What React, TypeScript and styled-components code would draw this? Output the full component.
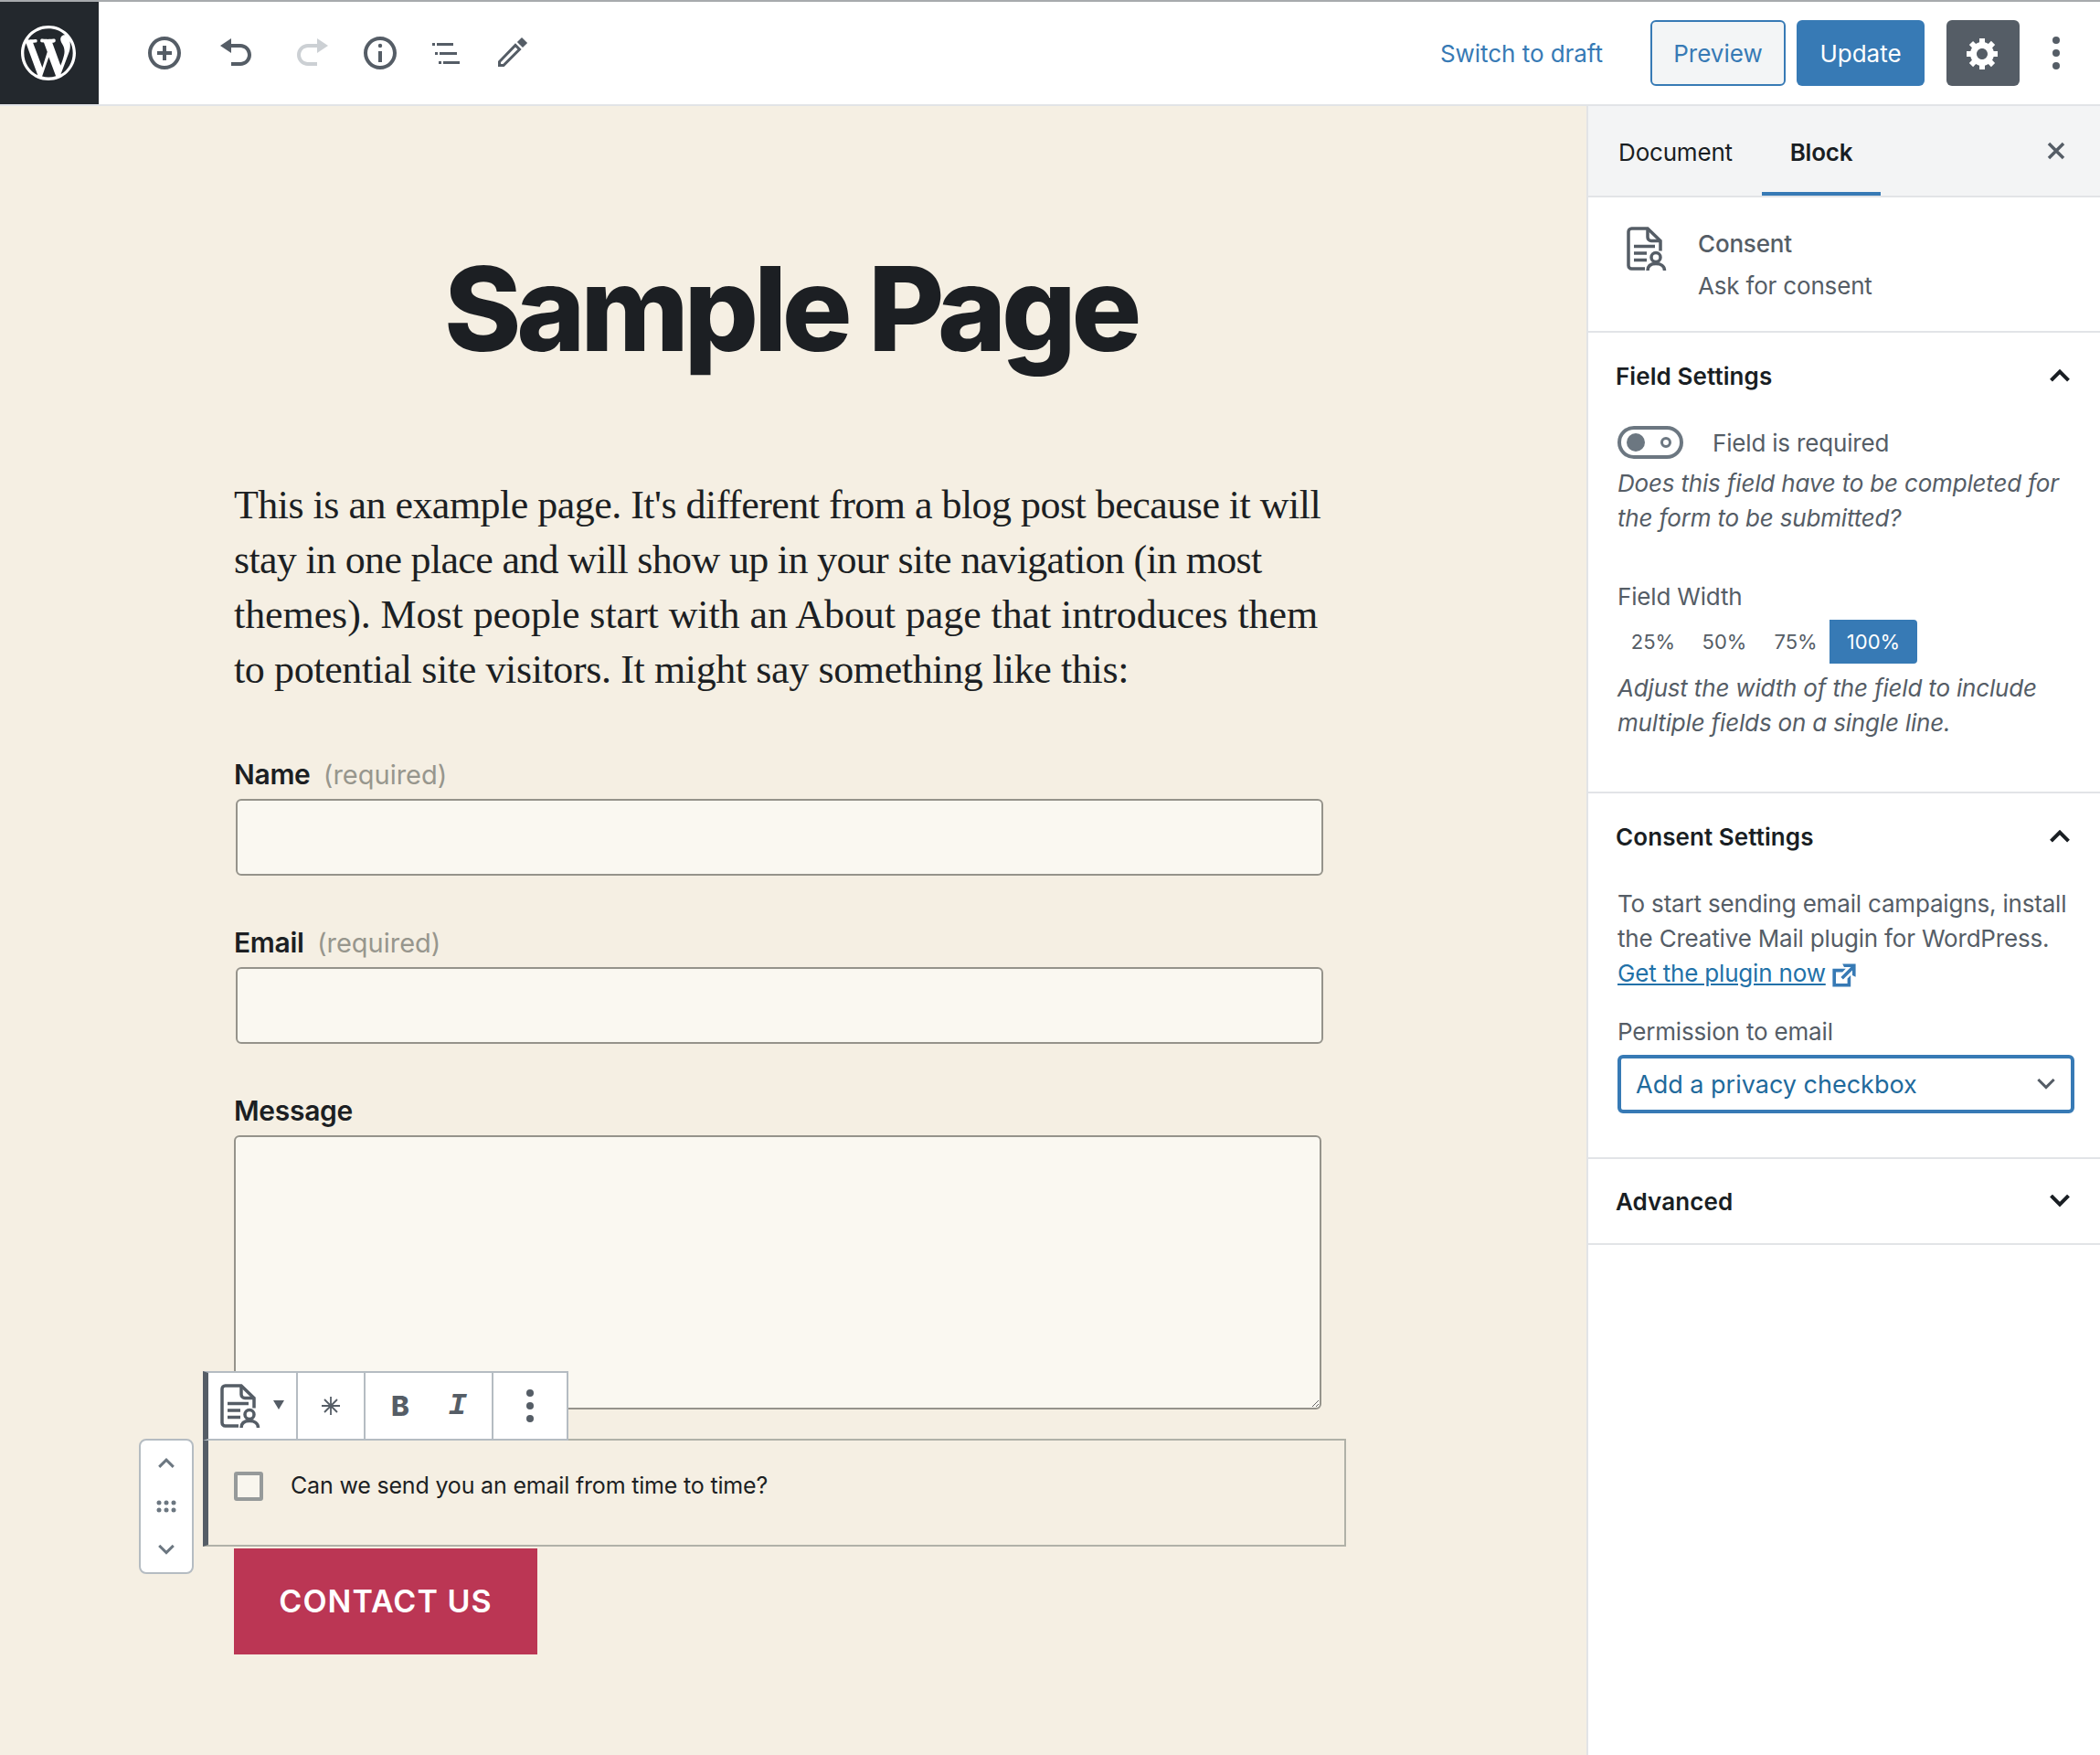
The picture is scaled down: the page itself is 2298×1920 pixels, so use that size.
import styled, { createGlobalStyle } from 'styled-components';

const GlobalStyle = createGlobalStyle`
  html, body {
    margin: 0;
    padding: 0;
    background: #fff;
  }
  * {
    box-sizing: border-box;
  }
`;

const paragraphLines = [
  { text: "This is an example page. It's different from a blog post because it will", spacing: -0.52 },
  { text: 'stay in one place and will show up in your site navigation (in most', spacing: -0.67 },
  { text: 'themes). Most people start with an About page that introduces them', spacing: -0.08 },
  { text: 'to potential site visitors. It might say something like this:', spacing: -0.38 },
];

const Chevron = ({ up, size = 22, weight = 4, color = '#191e23' }: { up?: boolean; size?: number; weight?: number; color?: string }) => (
  <svg width={size} height={size * 0.6} viewBox="0 0 22 13" fill="none" stroke={color} strokeWidth={(weight * 22) / size}>
    <path d={up ? 'M1.5 12 11 2.5l9.5 9.5' : 'M1.5 1 11 10.5 20.5 1'} />
  </svg>
);

const DotsIcon = () => (
  <svg width="40" height="40" viewBox="0 0 40 40" fill="#555d66">
    <circle cx="20" cy="6" r="4" />
    <circle cx="20" cy="20" r="4" />
    <circle cx="20" cy="34" r="4" />
  </svg>
);

const ConsentIcon = () => (
  <svg width="44" height="48" viewBox="0 0 44 48" fill="none" stroke="#555d66" strokeWidth="3.5">
    <path d="M20 46H5.500a3.500 3.500 0 0 1-3.500-3.500V5.500A3.500 3.500 0 0 1 5.500 2H23l14 13.500v11" />
    <path d="M23 2v9.500a4 4 0 0 0 4 4h10" />
    <path d="M8 21.500h23M8 29h14M8 36.500h14" />
    <circle cx="32" cy="33.500" r="5" />
    <path d="M23 48c0-5 3.500-7.500 9-7.500s9.500 2.500 9.500 7.500" />
  </svg>
);

const App = () => {
  return (
    <Page>
      <GlobalStyle />
      <TopBar>
        <Logo>
          <svg width="60" height="60" viewBox="0 0 20 20" fill="#fff">
            <path d="M20 10c0-5.510-4.490-10-10-10C4.480 0 0 4.490 0 10c0 5.520 4.480 10 10 10 5.510 0 10-4.480 10-10zM7.780 15.370L4.370 6.220c.550-.020 1.170-.080 1.170-.080.500-.060.440-1.130-.060-1.110 0 0-1.450.110-2.370.110-.180 0-.370 0-.580-.010C4.120 2.690 6.870 1.110 10 1.110c2.330 0 4.450.870 6.050 2.340-.680-.110-1.650.390-1.650 1.580 0 .740.450 1.360.900 2.100.350.610.550 1.360.550 2.460 0 1.490-1.400 5-1.400 5l-3.030-8.350c.540-.020.820-.170.820-.170.500-.050.440-1.250-.060-1.220 0 0-1.440.120-2.380.120-.870 0-2.330-.120-2.330-.120-.500-.030-.560 1.200-.060 1.220l.920.080 1.260 3.410zM17.410 10c.240-.640.740-1.870.430-4.250.700 1.290 1.050 2.710 1.050 4.250 0 3.290-1.730 6.240-4.400 7.780.970-2.590 1.940-5.200 2.920-7.780zM6.100 18.090C3.120 16.650 1.110 13.530 1.110 10c0-1.300.230-2.480.720-3.590C3.250 10.300 4.670 14.200 6.100 18.090zm4.030-6.630l2.580 6.980c-.850.290-1.750.430-2.710.430-.800 0-1.580-.110-2.300-.330.810-2.380 1.630-4.740 2.430-7.080z" />
          </svg>
        </Logo>
        <ToolIcons>
          <ToolIcon $left={0}>
            <svg width="40" height="40" viewBox="0 0 20 20" fill="#555d66">
              <path d="M10 1c-5 0-9 4-9 9s4 9 9 9 9-4 9-9-4-9-9-9zm0 16c-3.900 0-7-3.100-7-7s3.100-7 7-7 7 3.100 7 7-3.100 7-7 7zm1-11H9v3H6v2h3v3h2v-3h3V9h-3V6z" />
            </svg>
          </ToolIcon>
          <ToolIcon $left={39}>
            <svg width="40" height="40" viewBox="0 0 20 20" fill="#555d66">
              <path d="M12 5H7V2L1 6l6 4V7h5c2.200 0 4 1.800 4 4s-1.800 4-4 4H7v2h5c3.300 0 6-2.700 6-6s-2.700-6-6-6z" />
            </svg>
          </ToolIcon>
          <ToolIcon $left={42}>
            <svg width="40" height="40" viewBox="0 0 20 20" fill="#ccd0d4">
              <path d="M8 5h5V2l6 4-6 4V7H8c-2.200 0-4 1.800-4 4s1.800 4 4 4h5v2H8c-3.300 0-6-2.700-6-6s2.700-6 6-6z" />
            </svg>
          </ToolIcon>
          <ToolIcon $left={35}>
            <svg width="40" height="40" viewBox="0 0 20 20" fill="#555d66">
              <path d="M10 1c-5 0-9 4-9 9s4 9 9 9 9-4 9-9-4-9-9-9zm0 16c-3.900 0-7-3.100-7-7s3.100-7 7-7 7 3.100 7 7-3.100 7-7 7z" />
              <path d="M9 9h2v6H9z" />
              <circle cx="10" cy="6" r="1.100" />
            </svg>
          </ToolIcon>
          <ToolIcon $left={32}>
            <svg width="40" height="40" viewBox="0 0 40 40" fill="#555d66">
              <path d="M5 9h3v3H5zM10 9h18v3H10zM8 19h3v3H8zM13 19h19v3H13zM12 29h3v3h-3zM17 29h18v3H17z" />
            </svg>
          </ToolIcon>
          <ToolIcon $left={32}>
            <svg width="40" height="40" viewBox="0 0 40 40" fill="none" stroke="#555d66" strokeWidth="3">
              <path d="M6.500 33.500v-4L24 11.500l4.500 4.500L11 33.500z" />
              <path d="M28 8l3-3 4 4-3 3z" fill="#555d66" />
            </svg>
          </ToolIcon>
        </ToolIcons>
        <Actions>
          <SwitchLink>Switch to draft</SwitchLink>
          <PreviewButton>Preview</PreviewButton>
          <UpdateButton>Update</UpdateButton>
          <GearButton>
            <svg width="40" height="40" viewBox="0 0 20 20" fill="#fff">
              <path d="M18 12h-2.180c-.17.700-.44 1.350-.81 1.930l1.540 1.540-2.100 2.100-1.540-1.540c-.58.360-1.230.630-1.910.790V19H8v-2.180c-.68-.16-1.330-.43-1.910-.79l-1.540 1.540-2.120-2.120 1.540-1.540c-.36-.58-.63-1.230-.79-1.910H1V9.030h2.170c.16-.7.440-1.350.8-1.940L2.430 5.550l2.100-2.100 1.540 1.540c.58-.37 1.240-.64 1.930-.81V2h3v2.180c.68.160 1.330.430 1.910.790l1.540-1.540 2.120 2.120-1.540 1.540c.36.590.64 1.240.8 1.940H18V12zm-8.500 1.500c1.660 0 3-1.340 3-3s-1.340-3-3-3-3 1.340-3 3 1.340 3 3 3z" />
            </svg>
          </GearButton>
          <MoreSlot>
            <DotsIcon />
          </MoreSlot>
        </Actions>
      </TopBar>

      <Body>
        <Editor>
          <Title>Sample Page</Title>
          <Column>
            <Paragraph>
              {paragraphLines.map((line) => (
                <ParagraphLine key={line.text} $spacing={line.spacing}>
                  {line.text}
                </ParagraphLine>
              ))}
            </Paragraph>

            <FieldLabel $top={67}>
              Name <Required>(required)</Required>
            </FieldLabel>
            <TextInput />
            <FieldLabel $top={56}>
              Email <Required>(required)</Required>
            </FieldLabel>
            <TextInput />
            <FieldLabel $top={56}>Message</FieldLabel>
            <MessageBox />

            <ConsentBlock>
              <BlockToolbar>
                <ToolbarGroup $width={98}>
                  <ConsentIcon />
                  <Caret />
                </ToolbarGroup>
                <ToolbarGroup $width={74}>
                  <svg width="22" height="22" viewBox="0 0 22 22" stroke="#555d66" strokeWidth="1.800">
                    <path d="M11 1v20M1 11h20M4 4l14 14M18 4 4 18" />
                  </svg>
                </ToolbarGroup>
                <FormatGroup>
                  <BoldMark>B</BoldMark>
                  <ItalicMark>I</ItalicMark>
                </FormatGroup>
                <ToolbarGroup $width={82}>
                  <DotsIcon />
                </ToolbarGroup>
              </BlockToolbar>
              <Mover>
                <Chevron up size={18} weight={3} color="#6c7781" />
                <svg width="22" height="14" viewBox="0 0 22 14" fill="#6c7781">
                  <circle cx="3" cy="3" r="2.500" />
                  <circle cx="11" cy="3" r="2.500" />
                  <circle cx="19" cy="3" r="2.500" />
                  <circle cx="3" cy="11" r="2.500" />
                  <circle cx="11" cy="11" r="2.500" />
                  <circle cx="19" cy="11" r="2.500" />
                </svg>
                <Chevron size={18} weight={3} color="#6c7781" />
              </Mover>
              <CheckRow>
                <CheckBox />
                <CheckLabel>Can we send you an email from time to time?</CheckLabel>
              </CheckRow>
            </ConsentBlock>
            <ContactButton>CONTACT US</ContactButton>
          </Column>
        </Editor>

        <Sidebar>
          <SidebarTabs>
            <Tab $first>Document</Tab>
            <Tab $active>Block</Tab>
            <CloseSlot>
              <svg width="24" height="24" viewBox="0 0 24 24" stroke="#555d66" strokeWidth="3.500">
                <path d="M4 4l16 16M20 4 4 20" />
              </svg>
            </CloseSlot>
          </SidebarTabs>

          <BlockCard>
            <ConsentIcon />
            <BlockInfo>
              <BlockName>Consent</BlockName>
              <BlockDescription>Ask for consent</BlockDescription>
            </BlockInfo>
          </BlockCard>

          <Panel>
            <PanelHeading>
              Field Settings
              <Chevron up />
            </PanelHeading>
            <ToggleRow>
              <Toggle>
                <ToggleThumb />
                <ToggleRing />
              </Toggle>
              <SidebarText>Field is required</SidebarText>
            </ToggleRow>
            <HelpText>Does this field have to be completed for the form to be submitted?</HelpText>
            <WidthLabel>Field Width</WidthLabel>
            <WidthButtons>
              <WidthButton>25%</WidthButton>
              <WidthButton>50%</WidthButton>
              <WidthButton>75%</WidthButton>
              <WidthButton $active>100%</WidthButton>
            </WidthButtons>
            <HelpText>Adjust the width of the field to include multiple fields on a single line.</HelpText>
          </Panel>

          <Panel $paddingBottom={48}>
            <PanelHeading>
              Consent Settings
              <Chevron up />
            </PanelHeading>
            <InstallText>
              To start sending email campaigns, install the Creative Mail plugin for WordPress.
              <br />
              <PluginLink>Get the plugin now</PluginLink>
              <ExternalIcon width="36" height="36" viewBox="0 0 20 20" fill="#377ab5">
                <path d="M9 3h8v8l-2-1V6.920l-5.600 5.590-1.410-1.410L14.080 5H10zm3 12v-3l2-2v7H3V6h8L9 8H5v7h7z" />
              </ExternalIcon>
            </InstallText>
            <PermissionLabel>Permission to email</PermissionLabel>
            <SelectBox>
              Add a privacy checkbox
              <Chevron size={20} weight={3} color="#555d66" />
            </SelectBox>
          </Panel>

          <Panel $paddingBottom={0}>
            <AdvancedHeading>
              Advanced
              <Chevron />
            </AdvancedHeading>
          </Panel>
        </Sidebar>
      </Body>
    </Page>
  );
};

export default App;

const Page = styled.div`
  display: flex;
  flex-direction: column;
  width: 2298px;
  height: 1920px;
  overflow: hidden;
  font-family: Inter, 'Noto Sans', sans-serif;
`;

const TopBar = styled.header`
  display: flex;
  align-items: stretch;
  height: 116px;
  flex-shrink: 0;
  border-top: 2px solid #a7aaad;
  border-bottom: 2px solid #e2e4e7;
  background: #fff;
`;

const Logo = styled.div`
  display: flex;
  align-items: center;
  justify-content: center;
  width: 108px;
  padding-right: 2px;
  background: #23282d;
`;

const ToolIcons = styled.div`
  display: flex;
  align-items: center;
  padding-left: 52px;
`;

const ToolIcon = styled.div<{ $left: number }>`
  display: flex;
  margin-left: ${({ $left }) => $left}px;
`;

const Actions = styled.div`
  display: flex;
  align-items: center;
  margin-left: auto;
  padding-right: 28px;
`;

const SwitchLink = styled.a`
  margin-right: 52px;
  font-size: 26px;
  letter-spacing: -0.05px;
  color: #377ab5;
`;

const PreviewButton = styled.button`
  width: 148px;
  height: 72px;
  padding: 0;
  border: 2px solid #377ab5;
  border-radius: 6px;
  background: #f3f5f6;
  font: inherit;
  font-size: 26px;
  color: #377ab5;
`;

const UpdateButton = styled.button`
  width: 140px;
  height: 72px;
  margin-left: 12px;
  padding: 0;
  border: none;
  border-radius: 6px;
  background: #377ab5;
  font: inherit;
  font-size: 26px;
  color: #fff;
`;

const GearButton = styled.button`
  display: flex;
  align-items: center;
  justify-content: center;
  width: 80px;
  height: 72px;
  margin-left: 24px;
  padding: 0;
  border: none;
  border-radius: 6px;
  background: #555d66;
`;

const MoreSlot = styled.div`
  display: flex;
  margin-left: 20px;
`;

const Body = styled.div`
  display: flex;
  flex: 1;
  min-height: 0;
`;

const Editor = styled.main`
  width: 1736px;
  flex-shrink: 0;
  background: #f5efe3;
`;

const Title = styled.h1`
  margin: 152px 0 0;
  padding-right: 6px;
  font-size: 128px;
  font-weight: 800;
  line-height: 140px;
  letter-spacing: -0.0415em;
  text-align: center;
  color: #1c1f23;
`;

const Column = styled.div`
  width: 1190px;
  margin-left: 256px;
`;

const Paragraph = styled.div`
  margin: 115px 0 0;
  font-family: 'Liberation Serif', serif;
  font-size: 44px;
  line-height: 60px;
  white-space: nowrap;
  color: #1c1f23;
`;

const ParagraphLine = styled.div<{ $spacing: number }>`
  letter-spacing: ${({ $spacing }) => $spacing}px;
`;

const FieldLabel = styled.label<{ $top: number }>`
  display: block;
  margin-top: ${({ $top }) => $top}px;
  padding-bottom: 2px;
  font-size: 30px;
  font-weight: 600;
  line-height: 34px;
  letter-spacing: -0.3px;
  color: #1c1f23;
`;

const Required = styled.span`
  margin-left: 7px;
  font-size: 29px;
  font-weight: 400;
  line-height: 1;
  letter-spacing: 0;
  color: #97968d;
`;

const TextInput = styled.input`
  display: block;
  width: 1190px;
  height: 84px;
  margin: 8px 0 0 2px;
  border: 2px solid #95938b;
  border-radius: 6px;
  background: #faf8f1;
  outline: none;
`;

const MessageBox = styled.textarea`
  display: block;
  width: 1190px;
  height: 300px;
  margin: 8px 0 0;
  border: 2px solid #95938b;
  border-radius: 6px;
  background: #faf8f1;
  outline: none;
`;

const ConsentBlock = styled.div`
  position: relative;
  width: 1251px;
  height: 118px;
  margin: 32px 0 0 -34px;
  border: 2px solid #b0b1a8;
  border-left: 6px solid #555d66;
`;

const BlockToolbar = styled.div`
  position: absolute;
  left: -6px;
  bottom: 100%;
  display: flex;
  height: 76px;
  border-top: 2px solid #b5bcc2;
  border-bottom: 2px solid #b5bcc2;
  border-left: 6px solid #555d66;
  background: #fff;
`;

const ToolbarGroup = styled.div<{ $width: number }>`
  display: flex;
  align-items: center;
  justify-content: space-evenly;
  width: ${({ $width }) => $width}px;
  border-right: 2px solid #b5bcc2;
`;

const FormatGroup = styled.div`
  display: flex;
  align-items: center;
  justify-content: space-between;
  width: 140px;
  padding: 0 27px 0 28px;
  border-right: 2px solid #b5bcc2;
`;

const Caret = styled.span`
  width: 0;
  height: 0;
  margin-top: -2px;
  border-left: 6px solid transparent;
  border-right: 6px solid transparent;
  border-top: 10px solid #555d66;
`;

const BoldMark = styled.span`
  font-size: 30px;
  font-weight: 800;
  color: #555d66;
`;

const ItalicMark = styled.span`
  font-family: 'Liberation Mono', monospace;
  font-size: 34px;
  font-weight: 700;
  font-style: italic;
  color: #555d66;
`;

const Mover = styled.div`
  position: absolute;
  top: -2px;
  left: -76px;
  display: flex;
  flex-direction: column;
  align-items: center;
  justify-content: space-between;
  width: 60px;
  height: 148px;
  padding: 19px 0;
  border: 2px solid #b5bcc2;
  border-radius: 8px;
  background: #fff;
`;

const CheckRow = styled.div`
  display: flex;
  align-items: center;
  gap: 30px;
  height: 32px;
  margin: 34px 0 0 28px;
`;

const CheckLabel = styled.span`
  padding-bottom: 2px;
  font-size: 25px;
  letter-spacing: -0.18px;
  color: #1c1f23;
`;

const CheckBox = styled.span`
  width: 32px;
  height: 32px;
  border: 4px solid #969a9a;
  border-radius: 3px;
  background: #f9f6ee;
`;

const ContactButton = styled.button`
  display: block;
  width: 332px;
  height: 116px;
  margin-top: 2px;
  padding: 0 0 2px;
  border: none;
  background: #bb3654;
  font: inherit;
  font-size: 34px;
  font-weight: 600;
  letter-spacing: 0.03em;
  color: #fff;
`;

const Sidebar = styled.aside`
  flex: 1;
  border-left: 2px solid #e2e4e7;
  background: #fff;
`;

const SidebarTabs = styled.div`
  display: flex;
  align-items: stretch;
  height: 100px;
  padding-left: 1px;
  border-bottom: 2px solid #e2e4e7;
  background: #f3f4f5;
`;

const Tab = styled.div<{ $active?: boolean; $first?: boolean }>`
  display: flex;
  align-items: center;
  justify-content: center;
  width: ${({ $first }) => ($first ? '189px' : '130px')};
  padding-top: ${({ $active }) => ($active ? '7px' : '3px')};
  font-size: 26px;
  font-weight: ${({ $active }) => ($active ? 600 : 400)};
  letter-spacing: -0.2px;
  color: #191e23;
  border-bottom: ${({ $active }) => ($active ? '4px solid #377ab5' : 'none')};
`;

const CloseSlot = styled.div`
  display: flex;
  align-items: center;
  margin-left: auto;
  padding: 0 36px 0 0;
`;

const BlockCard = styled.div`
  display: flex;
  gap: 34px;
  height: 148px;
  padding: 32px 0 0 42px;
  border-bottom: 2px solid #e2e4e7;
`;

const BlockInfo = styled.div`
  margin-top: 1px;
  letter-spacing: -0.18px;
`;

const BlockName = styled.div`
  font-size: 26px;
  font-weight: 500;
  line-height: 36px;
  color: #555d66;
`;

const BlockDescription = styled.div`
  margin-top: 10px;
  font-size: 26px;
  line-height: 36px;
  color: #555d66;
`;

const Panel = styled.section<{ $paddingBottom?: number }>`
  padding: 0 0 ${({ $paddingBottom = 56 }) => $paddingBottom}px 32px;
  border-bottom: 2px solid #e2e4e7;
  letter-spacing: -0.18px;
`;

const PanelHeading = styled.h2`
  display: flex;
  align-items: center;
  justify-content: space-between;
  height: 94px;
  margin: 0 0 0 -2px;
  padding-right: 33px;
  font-size: 26px;
  font-weight: 600;
  letter-spacing: 0.08px;
  color: #191e23;
`;

const AdvancedHeading = styled(PanelHeading)`
  height: 92px;
`;

const ToggleRow = styled.div`
  display: flex;
  align-items: center;
  gap: 32px;
  height: 36px;
  margin-top: 8px;
`;

const Toggle = styled.div`
  display: flex;
  align-items: center;
  justify-content: space-between;
  width: 72px;
  height: 36px;
  padding: 0 9px 0 6px;
  border: 4px solid #6c7781;
  border-radius: 18px;
`;

const ToggleThumb = styled.span`
  width: 20px;
  height: 20px;
  border-radius: 50%;
  background: #6c7781;
`;

const ToggleRing = styled.span`
  width: 12px;
  height: 12px;
  border: 3px solid #6c7781;
  border-radius: 50%;
`;

const SidebarText = styled.span`
  font-size: 26px;
  color: #555d66;
`;

const HelpText = styled.p`
  width: 510px;
  margin: 8px 0 0;
  font-size: 26px;
  font-style: italic;
  line-height: 38px;
  color: #555d66;
`;

const WidthLabel = styled.div`
  margin-top: 49px;
  font-size: 26px;
  line-height: 36px;
  color: #555d66;
`;

const WidthButtons = styled.div`
  display: flex;
  margin-top: 7px;
`;

const WidthButton = styled.button<{ $active?: boolean }>`
  width: ${({ $active }) => ($active ? '96px' : '78px')};
  height: 48px;
  margin-left: ${({ $active }) => ($active ? '-2px' : '0')};
  padding: 0;
  border: none;
  border-radius: 0 4px 4px 0;
  background: ${({ $active }) => ($active ? '#377ab5' : 'transparent')};
  font: inherit;
  font-size: 22px;
  color: ${({ $active }) => ($active ? '#fff' : '#555d66')};
`;

const InstallText = styled.p`
  width: 510px;
  margin: 8px 0 0;
  font-size: 26px;
  line-height: 38px;
  color: #555d66;
`;

const PluginLink = styled.a`
  color: #2271a8;
  text-decoration: underline;
`;

const ExternalIcon = styled.svg`
  margin: -9px 0 -9px 2px;
  vertical-align: middle;
`;

const PermissionLabel = styled.div`
  margin-top: 27px;
  font-size: 26px;
  line-height: 36px;
  color: #555d66;
`;

const SelectBox = styled.div`
  display: flex;
  align-items: center;
  justify-content: space-between;
  width: 500px;
  height: 64px;
  margin-top: 7px;
  padding: 0 17px 0 16px;
  border: 4px solid #377ab5;
  border-radius: 6px;
  font-size: 27px;
  letter-spacing: 0;
  color: #1f6a9c;
`;
